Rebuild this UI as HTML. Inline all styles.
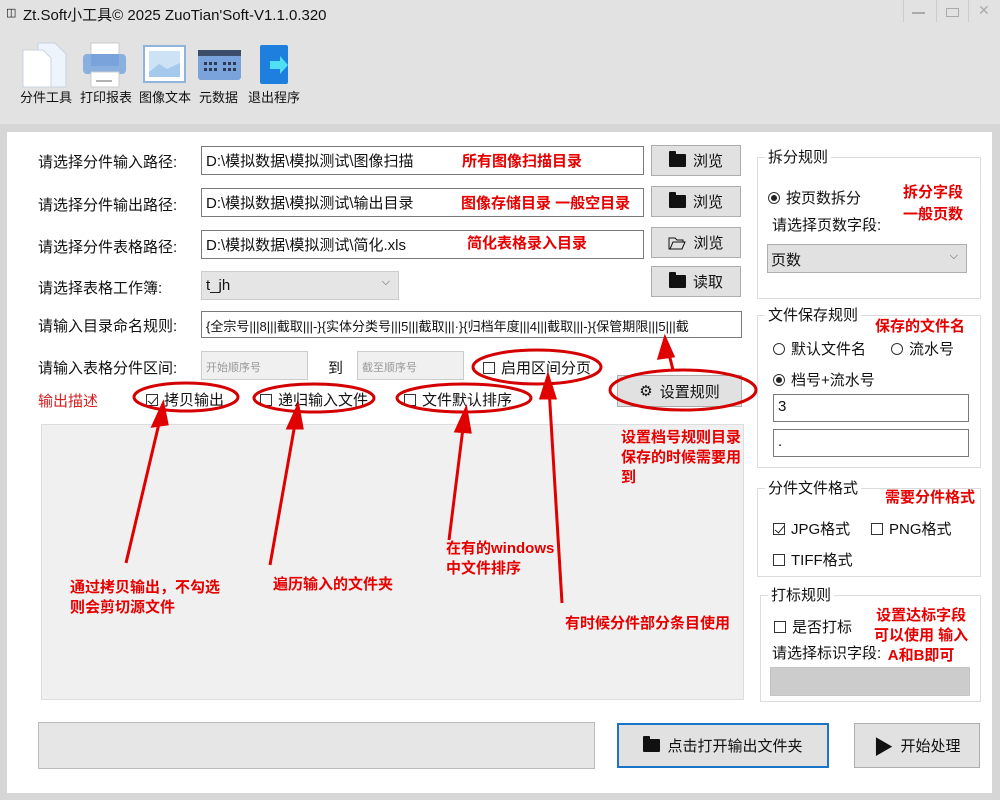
<!DOCTYPE html><html><head><meta charset="utf-8"><style>
*{margin:0;padding:0;box-sizing:border-box}
body{width:1000px;height:800px;background:#d6d6d6;font-family:"Liberation Sans","Noto Sans CJK SC",sans-serif;font-size:15px;color:#111;position:relative;overflow:hidden}
.a{position:absolute;white-space:nowrap}
.top{position:absolute;left:0;top:0;width:1000px;height:124px;background:#e2e2e2}
.panel{position:absolute;left:7px;top:132px;width:985px;height:661px;background:#fff}
.inp{position:absolute;background:#fff;border:1px solid #7a7a7a;height:29px;padding:3px 4px;font-size:15px;white-space:nowrap;overflow:hidden}
.btn{position:absolute;background:#e1e1e1;border:1px solid #adadad;height:31px;font-size:15px;display:flex;align-items:center;justify-content:center;gap:7px}
.red{color:#e60000;font-weight:bold;font-size:15px;position:absolute;white-space:nowrap}
.grp{position:absolute;border:1px solid #dcdcdc}
.gt{position:absolute;background:#fff;padding:0 3px;top:-12px;left:7px;font-size:15px}
.cb{display:inline-block;width:12px;height:12px;border:1px solid #333;vertical-align:-1px;margin-right:6px;position:relative}
.cb.on::after{content:"";position:absolute;left:3px;top:0px;width:4px;height:8px;border:solid #222;border-width:0 1.5px 1.5px 0;transform:rotate(40deg)}
.rd{display:inline-block;width:12px;height:12px;border:1px solid #333;border-radius:50%;vertical-align:-1px;margin-right:6px;position:relative}
.rd.on::after{content:"";position:absolute;left:2px;top:2px;width:6px;height:6px;border-radius:50%;background:#222}
.fold{display:inline-block;width:17px;height:13px;background:#111;border-radius:1px;position:relative}
.fold::before{content:"";position:absolute;left:0;top:-3px;width:7px;height:4px;background:#111;border-radius:1px 1px 0 0}
</style></head><body>
<div class="top"></div>
<div class="a" style="left:6px;top:6px;font-size:11px">&#9707;</div>
<div class="a" style="left:23px;top:4px;font-size:15px">Zt.Soft小工具© 2025 ZuoTian'Soft-V1.1.0.320</div>
<div class="a" style="left:903px;top:0;width:33px;height:22px;border-left:1px solid #ccc"></div>
<div class="a" style="left:936px;top:0;width:33px;height:22px;border-left:1px solid #ccc"></div>
<div class="a" style="left:968px;top:0;width:32px;height:22px;border-left:1px solid #ccc"></div>
<div class="a" style="left:912px;top:12px;width:13px;height:2px;background:#aaa"></div>
<div class="a" style="left:946px;top:8px;width:13px;height:9px;border:1.5px solid #aaa"></div>
<div class="a" style="left:978px;top:2px;color:#aaa;font-size:14px">✕</div>
<svg class="a" style="left:0;top:40px" width="300" height="48">
<path d="M38 3h17l11 11v33H38z" fill="#eef4fb" stroke="#c8d4e0"/><path d="M23 10h20l8 8v29H23z" fill="#fff" stroke="#c8d4e0"/>
<rect x="91" y="3" width="28" height="14" fill="#fff" stroke="#ccc"/><rect x="83" y="14" width="43" height="20" rx="4" fill="#8ab0e0"/><rect x="91" y="14" width="28" height="12" fill="#7aa3dc"/><rect x="91" y="32" width="28" height="15" fill="#fff" stroke="#ccc"/><line x1="96" y1="41" x2="112" y2="41" stroke="#666"/>
<rect x="144" y="6" width="41" height="36" fill="#fff" stroke="#8fb3dc" stroke-width="2"/><rect x="149" y="11" width="31" height="26" fill="#cde2f5"/><path d="M149 32l10-8 8 5 13-6v14h-31z" fill="#a5c8ec"/>
<rect x="198" y="10" width="43" height="30" rx="3" fill="#7aa3dc"/><rect x="198" y="10" width="43" height="6" fill="#3b4d6a"/>
<g fill="#2a3a55"><rect x="204" y="22" width="3" height="3"/><rect x="209" y="22" width="3" height="3"/><rect x="214" y="22" width="3" height="3"/><rect x="223" y="22" width="3" height="3"/><rect x="228" y="22" width="3" height="3"/><rect x="233" y="22" width="3" height="3"/><rect x="204" y="28" width="3" height="3"/><rect x="209" y="28" width="3" height="3"/><rect x="214" y="28" width="3" height="3"/><rect x="223" y="28" width="3" height="3"/><rect x="228" y="28" width="3" height="3"/><rect x="233" y="28" width="3" height="3"/></g>
<rect x="260" y="5" width="28" height="39" rx="2" fill="#1f7fde"/><path d="M270 21h10v-5l8 9-8 9v-5h-10z" fill="#4fe0f5"/>
</svg>
<div class="a" style="left:20px;top:87px;font-size:13px">分件工具</div>
<div class="a" style="left:80px;top:87px;font-size:13px">打印报表</div>
<div class="a" style="left:139px;top:87px;font-size:13px">图像文本</div>
<div class="a" style="left:199px;top:87px;font-size:13px">元数据</div>
<div class="a" style="left:248px;top:87px;font-size:13px">退出程序</div>

<div class="panel"></div>
<div class="a" style="left:38px;top:151px">请选择分件输入路径:</div>
<div class="a" style="left:38px;top:194px">请选择分件输出路径:</div>
<div class="a" style="left:38px;top:236px">请选择分件表格路径:</div>
<div class="a" style="left:38px;top:277px">请选择表格工作簿:</div>
<div class="a" style="left:38px;top:315px">请输入目录命名规则:</div>
<div class="a" style="left:38px;top:357px">请输入表格分件区间:</div>
<div class="a" style="left:38px;top:390px;color:#d42020">输出描述</div>

<div class="inp" style="left:201px;top:146px;width:443px">D:\模拟数据\模拟测试\图像扫描</div>
<div class="inp" style="left:201px;top:188px;width:443px">D:\模拟数据\模拟测试\输出目录</div>
<div class="inp" style="left:201px;top:230px;width:443px">D:\模拟数据\模拟测试\简化.xls</div>
<div class="inp" style="left:201px;top:271px;width:198px;background:#e5e5e5;border-color:#ccc;padding-top:5px">t_jh<span style="position:absolute;right:8px;top:4px;font-size:11px;color:#555">⌵</span></div>
<div class="inp" style="left:201px;top:311px;width:541px;height:27px;font-size:13px;padding-top:4px">{全宗号|||8|||截取|||-}{实体分类号|||5|||截取|||·}{归档年度|||4|||截取|||-}{保管期限|||5|||截</div>
<div class="inp" style="left:201px;top:351px;width:107px;background:#f0f0f0;border-color:#ccc;font-size:11px;color:#999;padding-top:7px">开始顺序号</div>
<div class="a" style="left:328px;top:357px">到</div>
<div class="inp" style="left:357px;top:351px;width:107px;background:#f0f0f0;border-color:#ccc;font-size:11px;color:#999;padding-top:7px">截至顺序号</div>
<div class="a" style="left:483px;top:357px"><span class="cb"></span>启用区间分页</div>
<div class="a" style="left:146px;top:389px"><span class="cb on"></span>拷贝输出</div>
<div class="a" style="left:260px;top:389px"><span class="cb"></span>递归输入文件</div>
<div class="a" style="left:404px;top:389px"><span class="cb"></span>文件默认排序</div>

<div class="btn" style="left:651px;top:145px;width:90px"><span class="fold"></span>浏览</div>
<div class="btn" style="left:651px;top:186px;width:90px"><span class="fold"></span>浏览</div>
<div class="btn" style="left:651px;top:227px;width:90px"><svg width="18" height="14"><path d="M1 2h6l2 2h6v2H5l-3 7H1z M5 6h12l-3 7H2z" fill="none" stroke="#111"/></svg>浏览</div>
<div class="btn" style="left:651px;top:266px;width:90px"><span class="fold"></span>读取</div>
<div class="btn" style="left:617px;top:375px;width:125px;height:32px"><span style="font-size:15px">⚙</span>设置规则</div>

<div class="a" style="left:41px;top:424px;width:703px;height:276px;background:#f0f0f0;border:1px solid #ddd"></div>
<div class="a" style="left:38px;top:722px;width:557px;height:47px;background:#e6e6e6;border:1px solid #bbb"></div>
<div class="btn" style="left:617px;top:723px;width:212px;height:45px;border:2px solid #1a74c8"><span class="fold"></span>点击打开输出文件夹</div>
<div class="btn" style="left:854px;top:723px;width:126px;height:45px"><span style="font-size:20px">▶</span>开始处理</div>

<div class="grp" style="left:757px;top:157px;width:224px;height:142px"><div class="gt">拆分规则</div></div>
<div class="a" style="left:768px;top:187px"><span class="rd on"></span>按页数拆分</div>
<div class="a" style="left:772px;top:214px">请选择页数字段:</div>
<div class="a" style="left:767px;top:244px;width:200px;height:29px;background:#e1e1e1;border:1px solid #adadad;padding:4px 3px">页数<span style="position:absolute;right:8px;top:5px;font-size:11px;color:#555">⌵</span></div>
<div class="grp" style="left:757px;top:315px;width:224px;height:153px"><div class="gt">文件保存规则</div></div>
<div class="a" style="left:773px;top:338px"><span class="rd"></span>默认文件名</div>
<div class="a" style="left:891px;top:338px"><span class="rd"></span>流水号</div>
<div class="a" style="left:773px;top:369px"><span class="rd on"></span>档号+流水号</div>
<div class="inp" style="left:773px;top:394px;width:196px;height:28px">3</div>
<div class="inp" style="left:773px;top:429px;width:196px;height:28px">.</div>
<div class="grp" style="left:757px;top:488px;width:224px;height:89px"><div class="gt">分件文件格式</div></div>
<div class="a" style="left:773px;top:518px"><span class="cb on"></span>JPG格式</div>
<div class="a" style="left:871px;top:518px"><span class="cb"></span>PNG格式</div>
<div class="a" style="left:773px;top:549px"><span class="cb"></span>TIFF格式</div>
<div class="grp" style="left:760px;top:595px;width:221px;height:107px"><div class="gt">打标规则</div></div>
<div class="a" style="left:774px;top:616px"><span class="cb"></span>是否打标</div>
<div class="a" style="left:772px;top:642px">请选择标识字段:</div>
<div class="a" style="left:770px;top:667px;width:200px;height:29px;background:#ccc;border:1px solid #c4c4c4"></div>

<div class="red" style="left:462px;top:150px">所有图像扫描目录</div>
<div class="red" style="left:461px;top:192px">图像存储目录 一般空目录</div>
<div class="red" style="left:467px;top:232px">简化表格录入目录</div>
<div class="red" style="left:903px;top:182px;text-align:center;line-height:22px">拆分字段<br>一般页数</div>
<div class="red" style="left:875px;top:315px">保存的文件名</div>
<div class="red" style="left:885px;top:486px">需要分件格式</div>
<div class="red" style="left:874px;top:606px;line-height:20px;text-align:center">设置达标字段<br>可以使用 输入<br>A和B即可</div>
<div class="red" style="left:621px;top:428px;line-height:20px">设置档号规则目录<br>保存的时候需要用<br>到</div>
<div class="red" style="left:446px;top:539px;line-height:20px">在有的windows<br>中文件排序</div>
<div class="red" style="left:70px;top:578px;line-height:20px">通过拷贝输出，不勾选<br>则会剪切源文件</div>
<div class="red" style="left:273px;top:573px">遍历输入的文件夹</div>
<div class="red" style="left:565px;top:612px">有时候分件部分条目使用</div>

<svg class="a" style="left:0;top:0" width="1000" height="800">
<g fill="none" stroke="#d40000" stroke-width="3">
<ellipse cx="186" cy="397" rx="52" ry="14"/>
<ellipse cx="314" cy="398" rx="60" ry="14"/>
<ellipse cx="464" cy="398" rx="67" ry="14"/>
<ellipse cx="537" cy="367" rx="64" ry="17"/>
<ellipse cx="683" cy="390" rx="73" ry="20"/>
</g>
<g fill="#e00000" stroke="#e00000" stroke-width="3">
<line x1="126" y1="563" x2="161" y2="415"/><path d="M163 404l-10 22 14-2z"/>
<line x1="270" y1="565" x2="296" y2="418"/><path d="M298 406l-10 22 14 0z"/>
<line x1="449" y1="540" x2="464" y2="420"/><path d="M466 409l-10 22 14 1z"/>
<line x1="562" y1="603" x2="549" y2="388"/><path d="M548 376l-7 22 14 0z"/>
<line x1="673" y1="370" x2="668" y2="350"/><path d="M665 338l-6 20 14-2z"/>
</g>
</svg>
</body></html>
